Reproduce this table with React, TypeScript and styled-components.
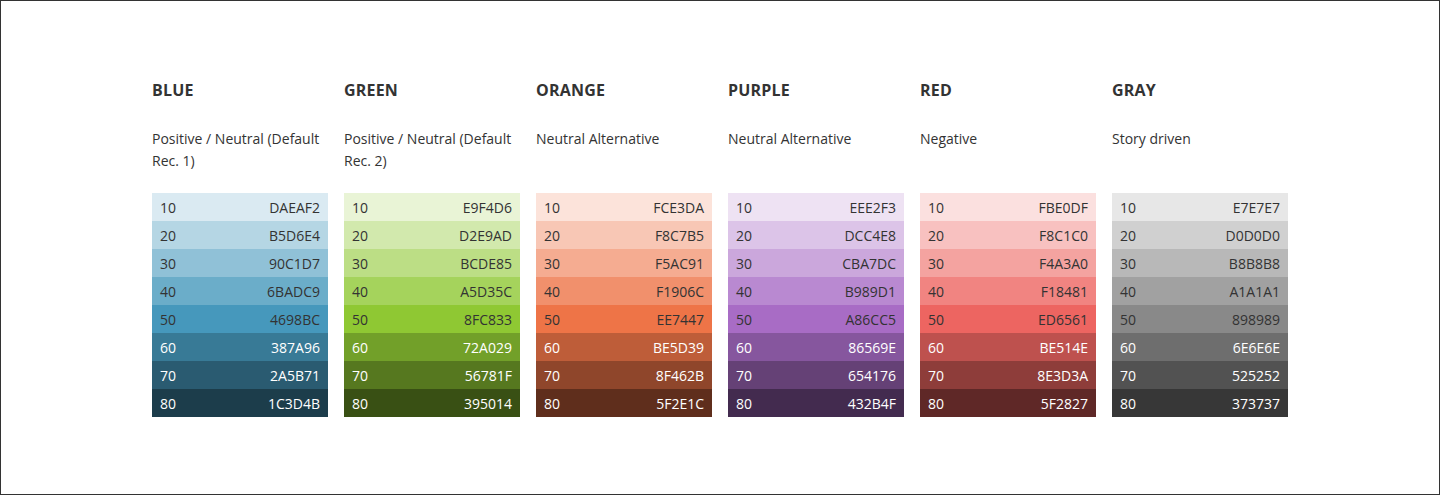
import React from "react";
import styled, { createGlobalStyle } from "styled-components";

const Global = createGlobalStyle`
  html, body { margin: 0; padding: 0; background: #fff; }
  body { font-family: "Open Sans", "Liberation Sans", sans-serif; color: #333; }
  * { box-sizing: border-box; }
`;

const Frame = styled.div`
  width: 1440px;
  height: 495px;
  border: 1px solid #333;
  display: flex;
  justify-content: center;
  padding-top: 79px;
`;

const Grid = styled.div`
  display: grid;
  grid-template-columns: repeat(6, 176px);
  column-gap: 16px;
  align-items: start;
`;

const Column = styled.section`
  display: flex;
  flex-direction: column;
`;

const Title = styled.h2`
  margin: 0;
  font-size: 16px;
  line-height: 21px;
  font-weight: 700;
  letter-spacing: 0.2px;
  color: #333;
`;

const Subtitle = styled.p`
  margin: 27px 0 21px;
  font-size: 14px;
  line-height: 22px;
  min-height: 44px;
  color: #333;
`;

const Swatches = styled.div`
  display: flex;
  flex-direction: column;
`;

const Swatch = styled.div<{ $bg: string; $dark: boolean }>`
  height: 28px;
  display: flex;
  align-items: center;
  justify-content: space-between;
  padding: 0 8px;
  font-size: 14px;
  background: #${(p) => p.$bg};
  color: ${(p) => (p.$dark ? "#fff" : "#333")};
`;

const palettes = [
  {
    name: "BLUE",
    desc: "Positive / Neutral (Default Rec. 1)",
    hex: ["DAEAF2", "B5D6E4", "90C1D7", "6BADC9", "4698BC", "387A96", "2A5B71", "1C3D4B"],
  },
  {
    name: "GREEN",
    desc: "Positive / Neutral (Default Rec. 2)",
    hex: ["E9F4D6", "D2E9AD", "BCDE85", "A5D35C", "8FC833", "72A029", "56781F", "395014"],
  },
  {
    name: "ORANGE",
    desc: "Neutral Alternative",
    hex: ["FCE3DA", "F8C7B5", "F5AC91", "F1906C", "EE7447", "BE5D39", "8F462B", "5F2E1C"],
  },
  {
    name: "PURPLE",
    desc: "Neutral Alternative",
    hex: ["EEE2F3", "DCC4E8", "CBA7DC", "B989D1", "A86CC5", "86569E", "654176", "432B4F"],
  },
  {
    name: "RED",
    desc: "Negative",
    hex: ["FBE0DF", "F8C1C0", "F4A3A0", "F18481", "ED6561", "BE514E", "8E3D3A", "5F2827"],
  },
  {
    name: "GRAY",
    desc: "Story driven",
    hex: ["E7E7E7", "D0D0D0", "B8B8B8", "A1A1A1", "898989", "6E6E6E", "525252", "373737"],
  },
];

export default function App() {
  return (
    <>
      <Global />
      <Frame>
        <Grid>
          {palettes.map((p) => (
            <Column key={p.name}>
              <Title>{p.name}</Title>
              <Subtitle>{p.desc}</Subtitle>
              <Swatches>
                {p.hex.map((h, i) => (
                  <Swatch key={h} $bg={h} $dark={i >= 5}>
                    <span>{(i + 1) * 10}</span>
                    <span>{h}</span>
                  </Swatch>
                ))}
              </Swatches>
            </Column>
          ))}
        </Grid>
      </Frame>
    </>
  );
}
